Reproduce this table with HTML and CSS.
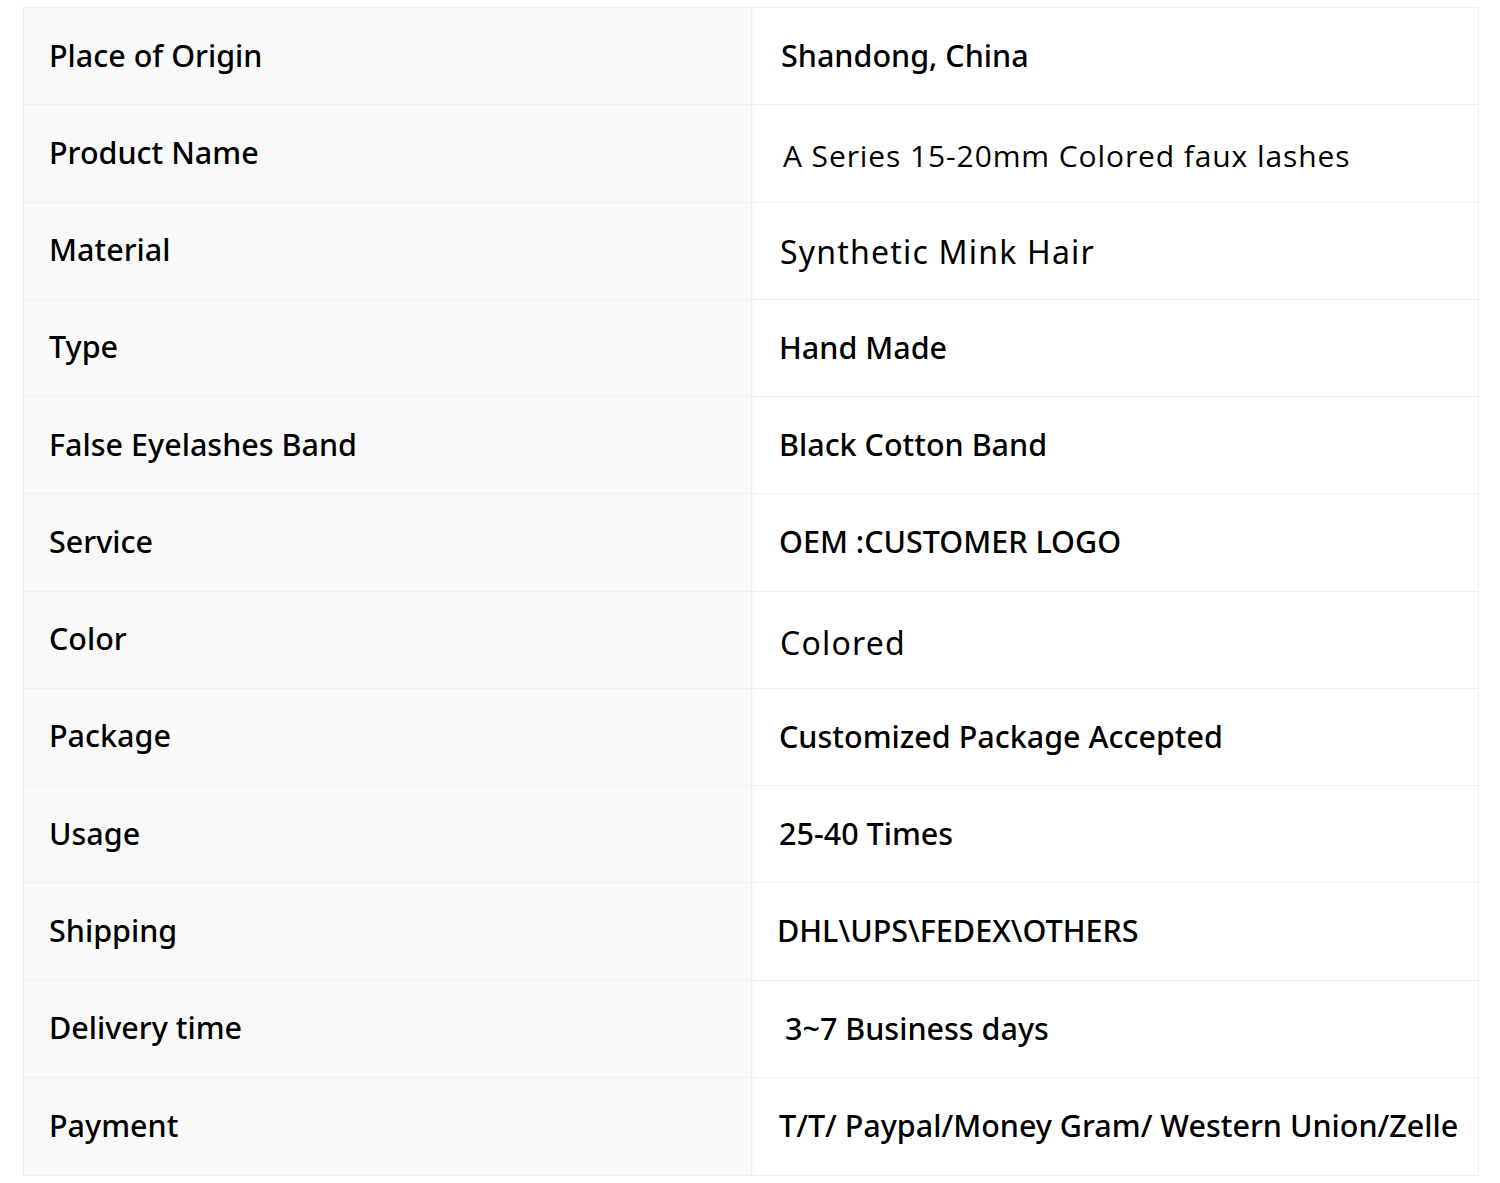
FILE: index.html
```html
<!DOCTYPE html>
<html>
<head>
<meta charset="utf-8">
<link rel="stylesheet" href="styles.css">
</head>
<body>
<div class="spec">
  <div class="row"><div class="k">Place of Origin</div><div class="v ind-s">Shandong, China</div></div>
  <div class="row"><div class="k">Product Name</div><div class="v alt">A Series 15-20mm Colored faux lashes</div></div>
  <div class="row"><div class="k">Material</div><div class="v alt lg">Synthetic Mink Hair</div></div>
  <div class="row"><div class="k">Type</div><div class="v">Hand Made</div></div>
  <div class="row"><div class="k">False Eyelashes Band</div><div class="v">Black Cotton Band</div></div>
  <div class="row"><div class="k">Service</div><div class="v">OEM :CUSTOMER LOGO</div></div>
  <div class="row"><div class="k">Color</div><div class="v alt lg low">Colored</div></div>
  <div class="row"><div class="k">Package</div><div class="v">Customized Package Accepted</div></div>
  <div class="row"><div class="k">Usage</div><div class="v">25-40 Times</div></div>
  <div class="row"><div class="k">Shipping</div><div class="v out">DHL\UPS\FEDEX\OTHERS</div></div>
  <div class="row"><div class="k">Delivery time</div><div class="v ind">3~7 Business days</div></div>
  <div class="row"><div class="k">Payment</div><div class="v">T/T/ Paypal/Money Gram/ Western Union/Zelle</div></div>
</div>
</body>
</html>
```
FILE: styles.css
```css
html, body { margin: 0; padding: 0; background: #fff; }
body { padding: 7px 21px 0 23px; font-family: "Noto Sans", "Open Sans", sans-serif; color: #000; }
.spec { border: 1px solid #efefef; width: 1456px; box-sizing: border-box; }
.row { display: grid; grid-template-columns: 728px 1fr; height: 97.25px; border-bottom: 1px solid #efefef; box-sizing: border-box; }
.row:last-child { border-bottom: none; }
.k { background: #f9f9f9; border-right: 1px solid #efefef; display: flex; align-items: center; padding-left: 25px; padding-bottom: 3px; font-size: 30.5px; font-weight: 500; letter-spacing: 0; }
.v { display: flex; align-items: center; padding-left: 25px; padding-bottom: 2px; font-size: 30.5px; font-weight: 500; letter-spacing: 0; border-left: 1px solid #f3f3f3; margin-left: 1px; }
.alt { font-family: "Open Sans", sans-serif; font-weight: 400; font-size: 30px; letter-spacing: 0.9px; padding-left: 29px; padding-bottom: 0; padding-top: 4px; }
.lg { font-family: "Noto Sans", sans-serif; font-size: 32px; letter-spacing: 1.2px; padding-left: 26px; padding-top: 1px; }
.low { padding-top: 6px; }
.ind { padding-left: 31px; }
.ind-s { padding-left: 27px; }
.out { padding-left: 23px; }
```
